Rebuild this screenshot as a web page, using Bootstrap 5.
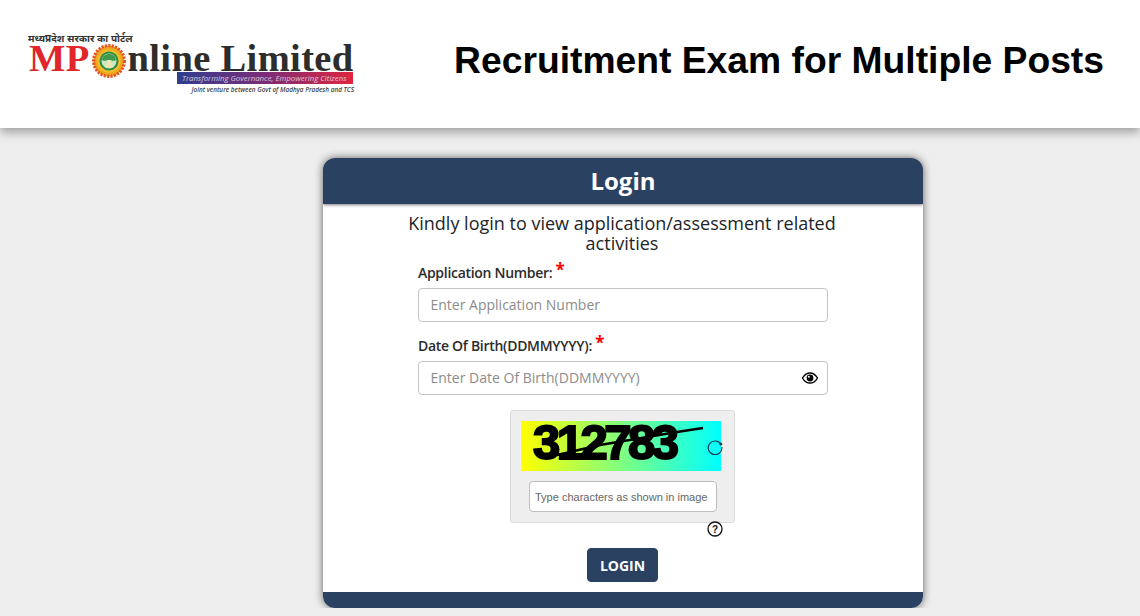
<!DOCTYPE html>
<html lang="en">
<head>
  <meta charset="UTF-8" />
  <title>Recruitment Exam for Multiple Posts</title>
  <meta name="viewport" content="width=device-width, initial-scale=1" />
  <link href="https://cdn.jsdelivr.net/npm/bootstrap@5.3.3/dist/css/bootstrap.min.css" rel="stylesheet" />
  <style>
    body {
      background-color: #eeeeee;
      font-family: "Open Sans", sans-serif;
      color: #212529;
      overflow: hidden;
    }

    .top-header {
      height: 128px;
      background-color: #fff;
      box-shadow: 0 4px 10px rgba(0, 0, 0, .35);
      padding: 0 36px 0 28px;
    }

    .logo-box {
      width: 326px;
      height: 64px;
      margin-top: 3px;
    }

    .logo-hindi {
      font-family: "Noto Sans", "Liberation Sans", sans-serif;
      font-size: 10px;
      font-weight: 700;
      line-height: 9px;
      height: 11px;
      color: #333;
    }

    .logo-main {
      font-family: "Liberation Serif", serif;
      font-weight: 700;
      font-size: 38.5px;
      line-height: 27px;
      height: 28px;
      margin-top: -1px;
      padding-left: 1px;
      letter-spacing: .35px;
      white-space: nowrap;
      color: #2d2d2d;
    }

    .logo-mp {
      color: #e0252b;
    }

    .logo-medal {
      width: 34px;
      height: 34px;
      margin: 0 2px;
      vertical-align: -7px;
    }

    .logo-strip {
      width: 176px;
      height: 12px;
      margin-left: 149px;
      background: linear-gradient(90deg, #2f3f8f, #7b2c78 50%, #e0253f);
      color: #d9c6d8;
      font-size: 7.8px;
      line-height: 12px;
      padding-left: 5px;
      white-space: nowrap;
      font-style: italic;
    }

    .logo-note {
      margin-top: 2px;
      font-size: 6.4px;
      line-height: 8px;
      font-style: italic;
      font-weight: 600;
      color: #444;
      text-align: right;
      white-space: nowrap;
    }

    .exam-title {
      font-family: "Liberation Sans", sans-serif;
      font-size: 37.25px;
      font-weight: 700;
      color: #000;
      margin: 0;
      padding-bottom: 8px;
    }

    .login-wrap {
      padding-top: 30px;
      padding-left: 323px;
    }

    .login-card {
      width: 600px;
      height: 450px;
      background-color: #fff;
      border-radius: 12px;
      box-shadow: 0 0 8px rgba(0, 0, 0, .6);
      overflow: hidden;
    }

    .login-head {
      height: 46px;
      background-color: #2b4162;
      color: #fff;
      font-size: 24px;
      font-weight: 700;
      line-height: 46px;
      text-align: center;
      box-shadow: 0 1px 3px rgba(0, 0, 0, .5);
    }

    .login-foot {
      height: 16px;
      background-color: #2b4162;
    }

    .login-body {
      height: 388px;
      padding-top: 9px;
    }

    .login-intro {
      width: 440px;
      margin: 0 0 0 79px;
      font-size: 18px;
      line-height: 20px;
      text-align: center;
    }

    .login-form {
      width: 410px;
      margin: 0 auto;
    }

    .field-label {
      display: block;
      font-size: 14px;
      font-weight: 600;
      line-height: 20px;
      height: 35px;
      padding-top: 10px;
      margin: 0;
      letter-spacing: -.3px;
      color: #2b2b2b;
    }

    .field-next {
      margin-top: 4px;
    }

    .field-req {
      color: #f00;
      font-size: 17px;
      font-weight: 700;
      line-height: 14px;
      vertical-align: 2px;
    }

    .field-input {
      height: 34px;
      font-size: 14px;
      padding: 0 12px 2px 11.5px;
      border: 1px solid #c4c4c4;
      border-radius: 4px;
      color: #333;
    }

    .field-input::placeholder {
      color: #8c8c8c;
    }

    .eye-icon {
      position: absolute;
      right: 10px;
      top: 11px;
      width: 16px;
      height: 12px;
    }

    .captcha-panel {
      width: 225px;
      height: 113px;
      margin: 15px 0 0 92px;
      background-color: #eeeeee;
      border: 1px solid #dcdcdc;
      border-radius: 3px;
      padding: 10px 0 0 10px;
    }

    .captcha-row {
      position: relative;
    }

    .captcha-pic {
      display: block;
      width: 200px;
      height: 50px;
    }

    .captcha-digits {
      font-family: "Liberation Sans", sans-serif;
      font-size: 49px;
      font-weight: 700;
      letter-spacing: -3.5px;
      stroke: #000;
      stroke-width: 2px;
    }

    .captcha-refresh {
      position: absolute;
      left: 186px;
      top: 18px;
      width: 16px;
      height: 16px;
    }

    .captcha-input {
      display: block;
      width: 188px;
      height: 31px;
      margin: 10px 0 0 8px;
      padding: 0 0 0 5px;
      font-family: "Liberation Sans", sans-serif;
      font-size: 11px;
      border: 1px solid #bdbdbd;
      border-radius: 4px;
      background-color: #fff;
    }

    .captcha-input::placeholder {
      color: #666;
      opacity: 1;
    }

    .help-row {
      width: 225px;
      margin: -2px 0 0 92px;
      height: 17px;
      padding-left: 197px;
    }

    .help-icon {
      display: block;
      width: 16px;
      height: 16px;
    }

    .login-btn {
      display: block;
      width: 71px;
      height: 34px;
      margin: 10px 0 0 169px;
      padding: 0;
      font-size: 14px;
      font-weight: 700;
      color: #fff;
      background-color: #2b4162;
      border-color: #2b4162;
      border-radius: 4px;
    }
  </style>
</head>
<body>
  <header class="top-header d-flex align-items-center justify-content-between">
    <div class="logo-box">
      <div class="logo-hindi">मध्यप्रदेश सरकार का पोर्टल</div>
      <div class="logo-main"><span class="logo-mp">MP</span><svg class="logo-medal" viewBox="0 0 32 32">
          <circle cx="16" cy="16" r="14.5" fill="#f0a51e" stroke="#e2532a" stroke-width="3" stroke-dasharray="2 1.2" />
          <circle cx="16" cy="16" r="11" fill="#f3bd2a" />
          <circle cx="16" cy="16" r="9" fill="#2f8f45" />
          <circle cx="16" cy="16" r="7" fill="#cfe6c4" />
          <path d="M9.5 15c0-3 3-5.5 6.500-5.5s6.500 2.500 6.500 5.500c-1.500 1-3 1-4.500 .3h-4c-1.500.7-3 .7-4.500-.3z" fill="#3f9a4c" />
          <path d="M14.500 15h3l.6 3.500 1.600 3.500h-7.400l1.600-3.500z" fill="#efe6b4" />
        </svg>nline Limited</div>
      <div class="logo-strip">Transforming Governance, Empowering Citizens</div>
      <div class="logo-note">Joint venture between Govt of Madhya Pradesh and TCS</div>
    </div>
    <h1 class="exam-title">Recruitment Exam for Multiple Posts</h1>
  </header>

  <div class="login-wrap">
    <div class="login-card">
      <div class="login-head">Login</div>
      <div class="login-body">
        <p class="login-intro mb-0">Kindly login to view application/assessment related activities</p>
        <form class="login-form">
          <div>
            <label class="field-label" for="appNo">Application Number: <span class="field-req">*</span></label>
            <input id="appNo" class="form-control field-input" type="text" placeholder="Enter Application Number" />
          </div>
          <div class="field-next">
            <label class="field-label" for="dob">Date Of Birth(DDMMYYYY): <span class="field-req">*</span></label>
            <div class="position-relative">
              <input id="dob" class="form-control field-input" type="text" placeholder="Enter Date Of Birth(DDMMYYYY)" />
              <svg class="eye-icon" viewBox="0 0 16 12">
                <path d="M.5 6C2.500 2.600 5 1 8 1s5.500 1.600 7.500 5c-2 3.400-4.500 5-7.500 5S2.500 9.400.5 6z" fill="none" stroke="#000" stroke-width="1.300" />
                <circle cx="8" cy="6" r="3.400" fill="#000" />
                <circle cx="6.800" cy="4.800" r="1" fill="#fff" />
              </svg>
            </div>
          </div>
          <div class="captcha-panel">
            <div class="captcha-row">
              <svg class="captcha-pic" viewBox="0 0 200 50">
                <defs>
                  <linearGradient id="capGrad">
                    <stop offset="0" stop-color="#ffff00" />
                    <stop offset="1" stop-color="#00ffff" />
                  </linearGradient>
                </defs>
                <rect width="200" height="50" fill="url(#capGrad)" />
                <text class="captcha-digits" x="12" y="38">312783</text>
                <path d="M36 34L79 24L156 11L182 7" fill="none" stroke="#000" stroke-width="2.500" />
              </svg>
              <svg class="captcha-refresh" viewBox="0 0 16 16">
                <path d="M14 5.500A6.800 6.800 0 1 0 14.800 8" fill="none" stroke="#1d3c50" stroke-width="1.200" />
                <circle cx="13.800" cy="5" r="1.500" fill="#1d3c50" />
              </svg>
            </div>
            <input class="captcha-input" type="text" placeholder="Type characters as shown in image" />
          </div>
          <div class="help-row">
            <svg class="help-icon" viewBox="0 0 16 16">
              <circle cx="8" cy="8" r="7" fill="#fff" stroke="#111" stroke-width="1.300" />
              <text x="8" y="11.600" font-family="Liberation Sans, sans-serif" font-size="10" font-weight="700" text-anchor="middle" fill="#111">?</text>
            </svg>
          </div>
          <button class="btn login-btn" type="button">LOGIN</button>
        </form>
      </div>
      <div class="login-foot"></div>
    </div>
  </div>

  <script src="https://cdn.jsdelivr.net/npm/bootstrap@5.3.3/dist/js/bootstrap.bundle.min.js"></script>
</body>
</html>
